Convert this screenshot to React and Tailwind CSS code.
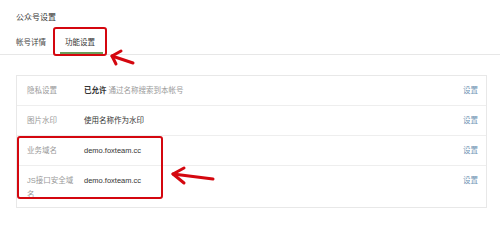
import React from 'react';

const rows = [
  { label: '隐私设置', value: <><span className="font-semibold text-[#333]">已允许</span> <span className="text-[#999]">通过名称搜索到本帐号</span></> },
  { label: '图片水印', value: '使用名称作为水印' },
  { label: '业务域名', value: 'demo.foxteam.cc' },
  { label: 'JS接口安全域名', value: 'demo.foxteam.cc', last: true },
];

const App = () => {
  return (
    <div className="relative w-[500px] h-[230px] overflow-hidden bg-white font-['Liberation_Sans','Noto_Sans_CJK_SC',sans-serif]">
      {/* header */}
      <div className="pt-[12px] pl-[16px] text-[8px] leading-[12px] text-[#333]">公众号设置</div>
      <div className="mt-[13px] flex items-end border-b border-[#e7e7e7] pl-[16px] text-[7.5px] leading-[12px]">
        <div className="pb-[5px] text-[#444]">帐号详情</div>
        <div className="ml-[14px] w-[43px] border-b-2 border-[#6b9e5c] pb-[3px] pl-[5px] text-[#333]">功能设置</div>
      </div>

      {/* settings table */}
      <div className="mt-[20px] ml-[16px] mr-[13px] border border-[#e8e8e8] text-[7.5px] leading-[14px]">
        {rows.map((row) => (
          <div
            key={row.label}
            className={`flex items-start pl-[10px] pr-[8px] pt-[8px] ${row.last ? 'pb-[5px]' : 'pb-[7px] border-b border-[#eeeeee]'}`}
          >
            <div className="w-[47px] text-[#999]">{row.label}</div>
            <div className="ml-[10px] flex-1 text-[#333]">{row.value}</div>
            <a className="text-[#6f93b3]">设置</a>
          </div>
        ))}
      </div>

      {/* annotations */}
      <div className="absolute left-[53px] top-[27px] w-[54px] h-[29px] rounded-[3px] border-2 border-[#d4070f]" />
      <div className="absolute left-[17px] top-[136px] w-[146px] h-[63px] rounded-[3px] border-2 border-[#d4070f]" />
      <svg className="absolute inset-0 pointer-events-none" width="500" height="230">
        <g stroke="#d4070f" strokeWidth="3" fill="none" strokeLinecap="round" strokeLinejoin="round">
          <path d="M133 63 L112 56" />
          <path d="M121 51 L112 56 L116 64" />
          <path d="M213 179 L173 174" />
          <path d="M184 168 L173 174 L184 183" />
        </g>
      </svg>
    </div>
  );
};

export default App;
